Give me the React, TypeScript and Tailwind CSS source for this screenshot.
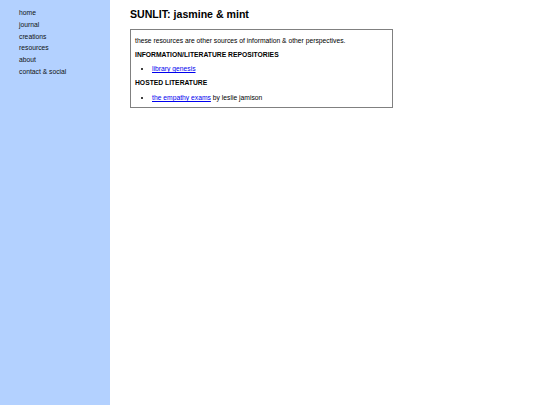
export default function App() {
  const nav = ["home", "journal", "creations", "resources", "about", "contact & social"];
  return (
    <div className="flex min-h-[405px] w-[540px] bg-white font-['Liberation_Sans',Arial,sans-serif] text-black">
      <aside className="w-[110px] shrink-0 bg-[#b3d1ff] pl-[19px] pt-[7px]">
        <ul className="flex flex-col">
          {nav.map((n) => (
            <li key={n} className="h-[11.8px] text-[6.75px] leading-[11.8px] text-[#111]">
              {n}
            </li>
          ))}
        </ul>
      </aside>
      <main className="pl-[20px] pt-[8px]">
        <h1 className="text-[10.6px] font-bold leading-[13px]">SUNLIT: jasmine &amp; mint</h1>
        <div className="mt-[8px] h-[79px] w-[263px] border border-[#808080] px-[4px] pt-[6px] text-[6.75px] leading-[9px]">
          <p>these resources are other sources of information &amp; other perspectives.</p>
          <p className="mt-[5px] font-bold">INFORMATION/LITERATURE REPOSITORIES</p>
          <ul className="mt-[5px] list-disc pl-[17px]">
            <li>
              <a href="#" className="text-[#0000ee] underline">library genesis</a>
            </li>
          </ul>
          <p className="mt-[5px] font-bold">HOSTED LITERATURE</p>
          <ul className="mt-[6px] list-disc pl-[17px]">
            <li>
              <a href="#" className="text-[#0000ee] underline">the empathy exams</a> by leslie jamison
            </li>
          </ul>
        </div>
      </main>
    </div>
  );
}
